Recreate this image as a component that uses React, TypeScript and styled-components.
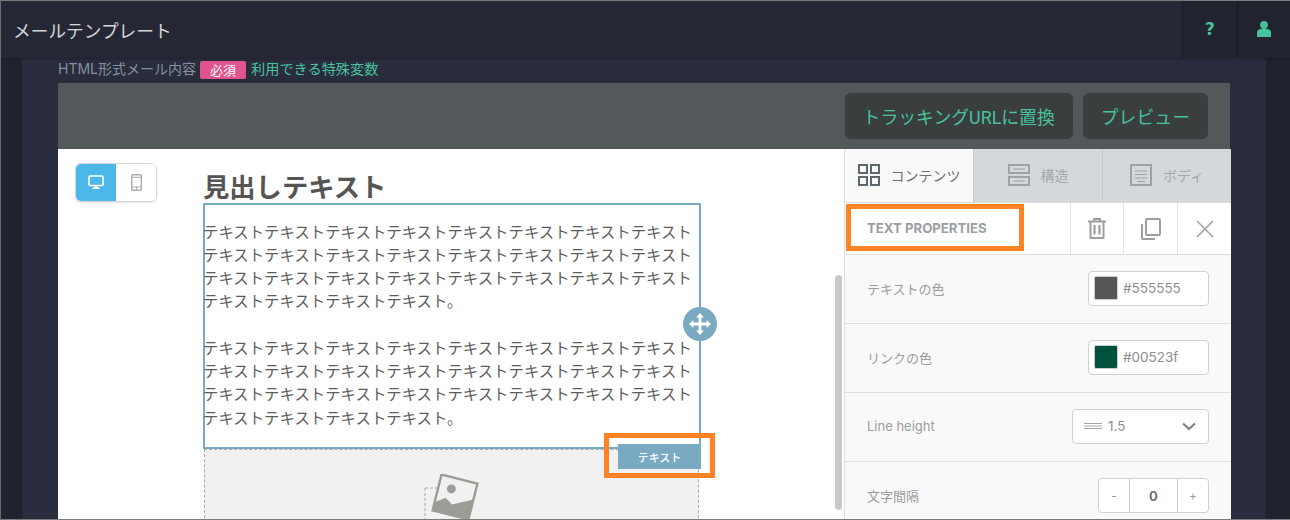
import React from 'react'
import styled, { createGlobalStyle } from 'styled-components'

const GlobalStyle = createGlobalStyle`
  html, body {
    margin: 0;
    padding: 0;
    background: #20232e;
  }
  * {
    box-sizing: border-box;
  }
`

const SANS = `Roboto, "Noto Sans CJK JP", sans-serif`
const UI = `Inter, "Noto Sans CJK JP", sans-serif`
const ACCENT = '#46c39c'
const BLOCK = '#7aa9c2'

const BODY_TEXT = 'テキスト'.repeat(28) + '。'

const App = () => {
  return (
    <>
      <GlobalStyle />
      <Frame>
        <Header>
          <Title>メールテンプレート</Title>
          <HeaderButton $width={55}>
            <QuestionMark>?</QuestionMark>
          </HeaderButton>
          <HeaderButton $width={53}>
            <svg width="14" height="16" viewBox="0 0 14 16">
              <circle cx="7" cy="4" r="3.9" fill={ACCENT} />
              <path d="M0 16v-4.4C0 9.4 1.8 8 3.8 8h6.4C12.2 8 14 9.4 14 11.6V16z" fill={ACCENT} />
            </svg>
          </HeaderButton>
        </Header>

        <Main>
          <Inner>
            <LabelRow>
              <FieldLabel>HTML形式メール内容</FieldLabel>
              <Required>必須</Required>
              <VarLink>利用できる特殊変数</VarLink>
            </LabelRow>

            <Toolbar>
              <ToolbarButton>トラッキングURLに置換</ToolbarButton>
              <ToolbarButton>プレビュー</ToolbarButton>
            </Toolbar>

            <Editor>
              <Canvas>
                <DeviceSwitch>
                  <DeviceButton $active>
                    <svg width="16" height="15" viewBox="0 0 16 15">
                      <rect x="1" y="1" width="14" height="9.5" rx="1" fill="none" stroke="#fff" strokeWidth="1.6" />
                      <path d="M6.5 11h3v1.6h2V14h-7v-1.4h2z" fill="#fff" />
                    </svg>
                  </DeviceButton>
                  <DeviceButton>
                    <svg width="11" height="17" viewBox="0 0 11 17">
                      <rect x="0.7" y="0.7" width="9.6" height="15.6" rx="1.4" fill="none" stroke="#a9adb0" strokeWidth="1.4" />
                      <path d="M1 3.2h9M1 13h9M5.5 13v3.4" stroke="#a9adb0" strokeWidth="1.1" fill="none" />
                    </svg>
                  </DeviceButton>
                </DeviceSwitch>

                <Column>
                  <Heading>見出しテキスト</Heading>
                  <TextBlock>
                    <p>{BODY_TEXT}</p>
                    <p>{BODY_TEXT}</p>
                    <MoveHandle>
                      <svg width="22" height="22" viewBox="0 0 22 22">
                        <path
                          d="M11 0l4 4.4h-2.6v5.2h5.2V7L22 11l-4.4 4v-2.600h-5.200v5.200H15L11 22l-4-4.400h2.600v-5.200H4.400V15L0 11l4.400-4v2.600h5.200V4.400H7z"
                          fill="#fff"
                        />
                      </svg>
                    </MoveHandle>
                    <BlockTag>テキスト</BlockTag>
                    <Highlight $left={399} $top={228} $width={111} $height={45} />
                  </TextBlock>
                  <ImageBlock>
                    <ImageIcon width="60" height="70" viewBox="0 0 60 70">
                      <path d="M1 14h12M1 14v56" stroke="#a8a8a4" strokeWidth="1" strokeDasharray="3 2" fill="none" />
                      <g transform="rotate(14 31 23)">
                        <rect x="12.500" y="4.500" width="37" height="37" fill="#f1f1f1" stroke="#9c9c97" strokeWidth="2.400" />
                        <circle cx="25.500" cy="16" r="4.400" fill="#9c9c97" />
                        <path d="M12.500 33l9.500-7 8 5 19.500-10v20.500h-37z" fill="#9c9c97" />
                      </g>
                    </ImageIcon>
                  </ImageBlock>
                </Column>
                <ScrollThumb />
              </Canvas>

              <Panel>
                <Tabs>
                  <Tab $active>
                    <svg width="22" height="22" viewBox="0 0 22 22" fill="none" stroke="#5d676c" strokeWidth="2">
                      <rect x="1" y="1" width="8" height="8" />
                      <rect x="13" y="1" width="8" height="8" />
                      <rect x="1" y="13" width="8" height="8" />
                      <rect x="13" y="13" width="8" height="8" />
                    </svg>
                    コンテンツ
                  </Tab>
                  <Tab>
                    <svg width="22" height="22" viewBox="0 0 22 22" fill="none" stroke="#9da2a4" strokeWidth="2">
                      <rect x="1" y="1" width="20" height="8" />
                      <rect x="1" y="13" width="20" height="8" />
                      <path d="M5 5h12M5 17h12" strokeWidth="1" />
                    </svg>
                    構造
                  </Tab>
                  <Tab>
                    <svg width="22" height="22" viewBox="0 0 22 22" fill="none" stroke="#9da2a4" strokeWidth="2">
                      <rect x="1" y="1" width="20" height="20" />
                      <path d="M5 7h12M5 10.500h12M5 14h12M7 17.500h8" strokeWidth="1" />
                    </svg>
                    ボディ
                  </Tab>
                </Tabs>

                <PropsHeader>
                  <PropsTitle>TEXT PROPERTIES</PropsTitle>
                  <PropsAction>
                    <svg width="18" height="21" viewBox="0 0 18 21" fill="none" stroke="#9b9fa2" strokeWidth="2">
                      <path d="M0 3.500h18M6 3.500V1h6v2.500M2.500 3.500V20h13V3.500" />
                      <path d="M6.500 7v9.500M11.500 7v9.500" strokeWidth="2.200" />
                    </svg>
                  </PropsAction>
                  <PropsAction>
                    <svg width="20" height="22" viewBox="0 0 20 22" fill="none" stroke="#9b9fa2" strokeWidth="2">
                      <rect x="5" y="1" width="14" height="16" rx="1" />
                      <path d="M1 6v14a1 1 0 0 0 1 1h12" />
                    </svg>
                  </PropsAction>
                  <PropsAction>
                    <svg width="18" height="18" viewBox="0 0 18 18" stroke="#9b9fa2" strokeWidth="1.500">
                      <path d="M1 1l16 16M17 1L1 17" />
                    </svg>
                  </PropsAction>
                  <Highlight $left={1} $top={1} $width={178} $height={47} />
                </PropsHeader>

                <PropRow>
                  <PropLabel>テキストの色</PropLabel>
                  <ColorField>
                    <Swatch $color="#555555" />
                    #555555
                  </ColorField>
                </PropRow>
                <PropRow>
                  <PropLabel>リンクの色</PropLabel>
                  <ColorField>
                    <Swatch $color="#00523f" />
                    #00523f
                  </ColorField>
                </PropRow>
                <PropRow>
                  <PropLabel>Line height</PropLabel>
                  <SelectField>
                    <svg width="18" height="8" viewBox="0 0 18 8" stroke="#a4a7a9" strokeWidth="1">
                      <path d="M0 1.500h18M0 4h18M0 6.500h18" />
                    </svg>
                    <SelectValue>1.5</SelectValue>
                    <svg width="14" height="9" viewBox="0 0 14 9" fill="none" stroke="#7e8386" strokeWidth="2.200">
                      <path d="M1 1.500l6 5.500 6-5.500" />
                    </svg>
                  </SelectField>
                </PropRow>
                <PropRow>
                  <PropLabel>文字間隔</PropLabel>
                  <Stepper>
                    <StepButton>-</StepButton>
                    <StepValue>0</StepValue>
                    <StepButton>+</StepButton>
                  </Stepper>
                </PropRow>
              </Panel>
            </Editor>
          </Inner>
        </Main>
      </Frame>
    </>
  )
}

export default App

const Frame = styled.div`
  width: 1290px;
  height: 520px;
  overflow: hidden;
  display: flex;
  flex-direction: column;
  border-top: 1px solid #7b7b7b;
  border-left: 1px solid #6b6b6b;
  border-bottom: 1px solid #7b7b7b;
  font-family: ${SANS};
`

const Header = styled.header`
  flex: 0 0 57px;
  display: flex;
  align-items: stretch;
  background: #252834;
  box-shadow: 0 1px 2px rgba(0, 0, 0, 0.25);
  position: relative;
  z-index: 1;
`

const Title = styled.h1`
  flex: 1;
  margin: 0;
  padding-left: 12px;
  align-self: center;
  font-size: 17.7px;
  font-weight: 400;
  color: #d5d6da;
`

const HeaderButton = styled.div<{ $width: number }>`
  flex: 0 0 ${props => props.$width}px;
  display: flex;
  align-items: center;
  justify-content: center;
  background: #21232e;
  border-left: 1px solid #191b23;
  padding-bottom: 2px;
`

const QuestionMark = styled.span`
  font-family: "DejaVu Sans", sans-serif;
  font-size: 17px;
  font-weight: 700;
  color: ${ACCENT};
`

const Main = styled.main`
  flex: 1;
  min-height: 0;
  display: flex;
  margin-right: 24px;
  padding-left: 21px;
  background: #20232e;
`

const Inner = styled.div`
  flex: 1;
  min-width: 0;
  display: flex;
  flex-direction: column;
  padding: 0 36px;
  background: #292c3d;
`

const LabelRow = styled.div`
  flex: 0 0 25px;
  min-height: 0;
  display: flex;
  align-items: center;
  padding-bottom: 1px;
  font-family: ${UI};
  font-size: 14px;
  line-height: 20px;
`

const FieldLabel = styled.span`
  margin-bottom: 2px;
  color: #84909f;
`

const Required = styled.span`
  width: 46px;
  height: 18px;
  margin: 0 5px 0 4px;
  display: flex;
  align-items: center;
  justify-content: center;
  border-radius: 2px;
  background: #e0538c;
  color: #fff;
  font-size: 13px;
`

const VarLink = styled.span`
  margin-bottom: 2px;
  color: ${ACCENT};
  font-size: 14.2px;
`

const Toolbar = styled.div`
  flex: 0 0 66px;
  display: flex;
  align-items: center;
  justify-content: flex-end;
  gap: 10px;
  padding-right: 22px;
  background: #53585a;
`

const ToolbarButton = styled.div`
  height: 46px;
  padding: 0 18px 1px;
  display: flex;
  align-items: center;
  border-radius: 6px;
  background: #3a3e3f;
  color: ${ACCENT};
  font-size: 17.85px;
`

const Editor = styled.div`
  flex: 1;
  min-height: 0;
  margin-right: -1px;
  display: flex;
  background: #fff;
`

const Canvas = styled.div`
  flex: 0 0 786px;
  position: relative;
  overflow: hidden;
  background: #fff;
`

const DeviceSwitch = styled.div`
  position: absolute;
  left: 17px;
  top: 14px;
  width: 82px;
  height: 39px;
  display: flex;
  border-radius: 6px;
  border: 1px solid #d6d6d6;
  box-shadow: 0 1px 2px rgba(0, 0, 0, 0.12);
  overflow: hidden;
`

const DeviceButton = styled.div<{ $active?: boolean }>`
  flex: 0 0 50%;
  display: flex;
  align-items: center;
  justify-content: center;
  background: ${props => (props.$active ? '#4cb8ea' : '#fff')};
`

const Column = styled.div`
  width: 496px;
  margin: 15px 0 0 145px;
`

const Heading = styled.h2`
  margin: 0;
  height: 39px;
  line-height: 49px;
  font-size: 26.3px;
  font-weight: 700;
  color: #555555;
  white-space: nowrap;
`

const TextBlock = styled.div`
  position: relative;
  height: 246px;
  padding: 16.500px 0 0 0;
  border: 2px solid ${BLOCK};
  width: 498px;

  p {
    margin: 0 0 23.250px -2px;
    width: 496px;
    font-size: 15.400px;
    line-height: 23.250px;
    color: #5c5c5c;
  }
`

const MoveHandle = styled.div`
  position: absolute;
  right: -18px;
  top: 102px;
  width: 34px;
  height: 34px;
  border-radius: 50%;
  background: ${BLOCK};
  display: flex;
  align-items: center;
  justify-content: center;
`

const BlockTag = styled.div`
  position: absolute;
  right: -2px;
  bottom: -22px;
  width: 83px;
  height: 25px;
  display: flex;
  align-items: center;
  justify-content: center;
  background: ${BLOCK};
  color: #fff;
  font-size: 11px;
  font-weight: 500;
  z-index: 1;
`

const Highlight = styled.div<{ $left: number; $top: number; $width: number; $height: number }>`
  position: absolute;
  left: ${props => props.$left}px;
  top: ${props => props.$top}px;
  width: ${props => props.$width}px;
  height: ${props => props.$height}px;
  border: 5px solid #ff8324;
  z-index: 2;
`

const ImageBlock = styled.div`
  width: 495px;
  height: 120px;
  margin-left: 1px;
  padding-top: 24px;
  display: flex;
  justify-content: center;
  background: #f1f1f1;
  border: 1px dashed #a9a9a9;
`

const ImageIcon = styled.svg`
  display: block;
  margin-left: 5px;
`

const ScrollThumb = styled.div`
  position: absolute;
  left: 777px;
  top: 126px;
  width: 7px;
  height: 235px;
  border-radius: 4px;
  background: #c9c9c9;
`

const Panel = styled.aside`
  flex: 0 0 387px;
  display: flex;
  flex-direction: column;
  background: #f9f9f9;
  border-left: 1px solid #dcdfe0;
  font-family: ${UI};
`

const Tabs = styled.div`
  flex: 0 0 54px;
  display: flex;
  border-bottom: 1px solid #dcdfe0;
`

const Tab = styled.div<{ $active?: boolean }>`
  flex: 1;
  display: flex;
  align-items: center;
  justify-content: center;
  gap: 11px;
  padding-bottom: 2px;
  font-size: 14px;
  color: ${props => (props.$active ? '#6c7377' : '#a3a7aa')};
  background: ${props => (props.$active ? '#f9f9f9' : '#d5d8da')};
  border-right: 1px solid #c6c9cb;

  &:last-child {
    border-right: 0;
  }
`

const PropsHeader = styled.div`
  flex: 0 0 52px;
  position: relative;
  display: flex;
  align-items: stretch;
  background: #fff;
  border-bottom: 1px solid #dcdfe0;
`

const PropsTitle = styled.div`
  flex: 1;
  align-self: center;
  padding: 0 0 2px 22px;
  font-size: 13.2px;
  font-weight: 700;
  color: #9a9ea1;
`

const PropsAction = styled.div`
  flex: 0 0 53.800px;
  display: flex;
  align-items: center;
  justify-content: center;
  border-left: 1px solid #e2e4e5;
`

const PropRow = styled.div`
  flex: 0 0 69px;
  display: flex;
  align-items: center;
  justify-content: space-between;
  padding: 0 22px 2px 22px;
  border-bottom: 1px solid #dcdfe0;

  &:last-child {
    border-bottom: 0;
  }
`

const PropLabel = styled.span`
  font-size: 13px;
  color: #9a9ea1;
`

const ColorField = styled.div`
  width: 121px;
  height: 35px;
  padding-left: 5px;
  display: flex;
  align-items: center;
  gap: 5px;
  border: 1px solid #cfd2d4;
  border-radius: 4px;
  background: #fff;
  font-size: 13.500px;
  color: #8b8f92;
`

const Swatch = styled.span<{ $color: string }>`
  width: 24px;
  height: 24px;
  border-radius: 2px;
  border: 1px solid #c9cbcc;
  background: ${props => props.$color};
`

const SelectField = styled.div`
  width: 137px;
  height: 35px;
  padding: 0 12px 0 11px;
  display: flex;
  align-items: center;
  border: 1px solid #cfd2d4;
  border-radius: 4px;
  background: #fff;
  font-size: 13.500px;
  color: #8b8f92;
`

const SelectValue = styled.span`
  flex: 1;
  margin-left: 6px;
`

const Stepper = styled.div`
  width: 111px;
  height: 35px;
  display: flex;
  border: 1px solid #cfd2d4;
  border-radius: 4px;
  background: #fff;
`

const StepButton = styled.div`
  flex: 0 0 30px;
  display: flex;
  align-items: center;
  justify-content: center;
  font-size: 12px;
  color: #9a9ea1;
`

const StepValue = styled.div`
  flex: 1;
  display: flex;
  align-items: center;
  justify-content: center;
  font-size: 13px;
  font-weight: 700;
  color: #6f7376;
  border-left: 1px solid #cfd2d4;
  border-right: 1px solid #cfd2d4;
`
